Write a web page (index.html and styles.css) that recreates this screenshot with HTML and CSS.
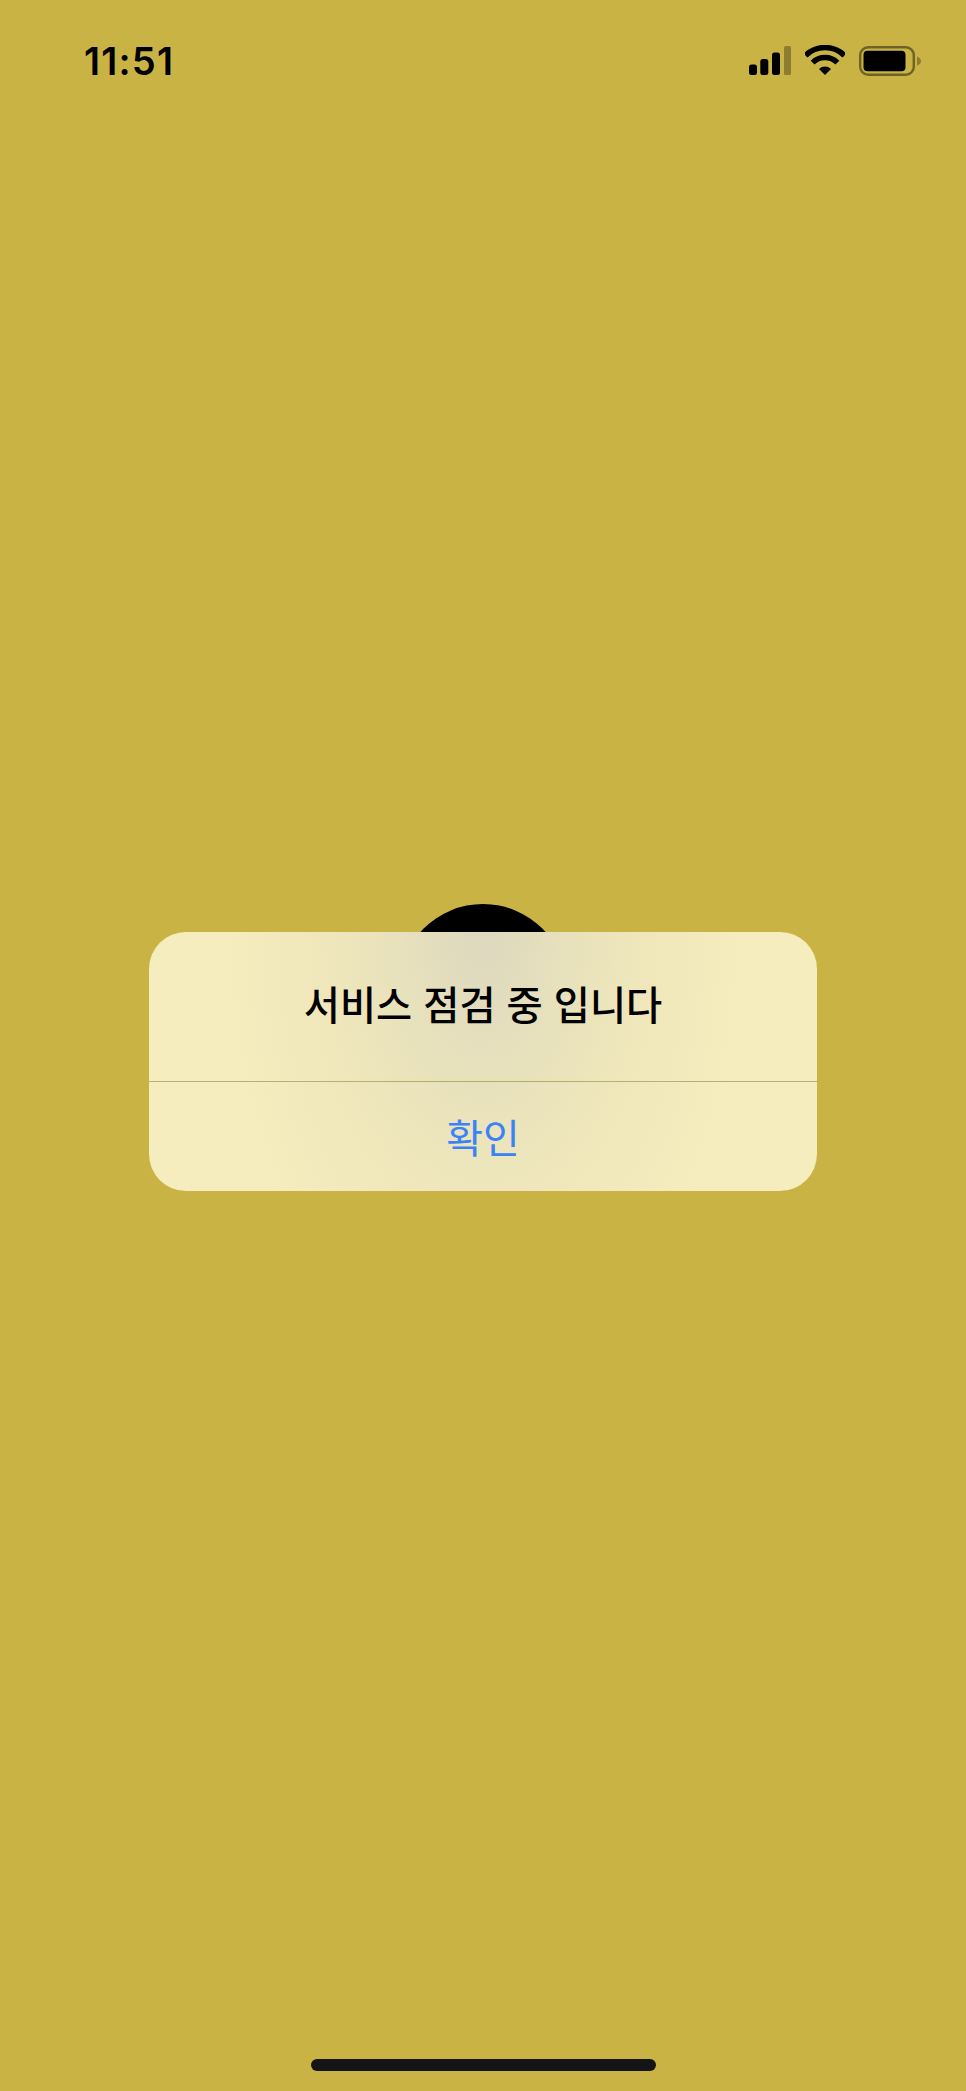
FILE: index.html
```html
<!DOCTYPE html>
<html lang="ko">
<head>
<meta charset="utf-8">
<title>서비스 점검</title>
<link rel="stylesheet" href="styles.css">
</head>
<body>
<div class="screen">
  <header class="status">
    <span class="time">11:51</span>
    <div class="icons">
      <svg class="signal" viewBox="0 0 42 29" width="42" height="29">
        <rect x="0" y="18.5" width="8" height="10.5" rx="2.5"/>
        <rect x="11.3" y="13" width="8" height="16" rx="2.5"/>
        <rect x="23" y="6.5" width="8" height="22.5" rx="2.5"/>
        <rect class="dim" x="35" y="0" width="7" height="29" rx="1.5"/>
      </svg>
      <svg class="wifi" viewBox="0 0 40 30" width="40" height="30">
        <path class="arc" d="M.55 10.55A27.5 27.5 0 0 1 39.45 10.55"/>
        <path class="arc" d="M7.6 17.6A17.5 17.5 0 0 1 32.4 17.6"/>
        <path d="M20 30L14 24A8.5 8.5 0 0 1 26 24Z"/>
      </svg>
      <svg class="battery" viewBox="0 0 62 30" width="62" height="30">
        <rect class="shell" x="1.2" y="1.2" width="53.6" height="27.6" rx="8"/>
        <rect x="4.5" y="4.7" width="42" height="20.6" rx="4"/>
        <path class="dim" d="M58 10.5C60.5 11.5 62 13 62 15S60.5 18.5 58 19.5Z"/>
      </svg>
    </div>
  </header>
  <main class="content">
    <div class="logo"></div>
  </main>
  <div class="home-bar"></div>
  <div class="alert">
    <h1 class="alert-title">서비스 점검 중 입니다</h1>
    <button class="alert-btn" type="button">확인</button>
  </div>
</div>
</body>
</html>
```

FILE: styles.css
```css
* { box-sizing: border-box; }
html, body { margin: 0; padding: 0; }
body { background: #c9b345; font-family: "Noto Sans CJK KR", "Inter", sans-serif; }
.screen {
  position: relative;
  width: 966px;
  height: 2091px;
  background: #c9b345;
  display: flex;
  flex-direction: column;
  overflow: hidden;
}
.status {
  height: 100px;
  flex: none;
  display: flex;
  justify-content: space-between;
  padding: 41px 45px 0 84px;
  align-items: flex-start;
}
.time {
  font-family: "Inter", sans-serif;
  font-weight: 600;
  font-size: 38px;
  line-height: 40px;
  color: #000;
  letter-spacing: 1.2px;
}
.icons {
  display: flex;
  align-items: flex-start;
  padding-top: 4px;
}
.signal { margin-top: 1px; margin-right: 14px; fill: #000; }
.wifi { margin-top: 0; margin-right: 14px; fill: #000; }
.battery { margin-top: 1px; fill: #000; }
.signal .dim, .battery .dim { fill: rgba(0,0,0,.3); }
.wifi .arc { fill: none; stroke: #000; stroke-width: 5.5; }
.battery .shell { fill: none; stroke: rgba(0,0,0,.45); stroke-width: 2.4; }
.content {
  flex: 1;
  display: flex;
  justify-content: center;
  align-items: flex-start;
  padding-top: 804px;
}
.logo {
  width: 168px;
  height: 168px;
  border-radius: 50%;
  background: #000;
}
.home-bar {
  flex: none;
  align-self: center;
  width: 345px;
  height: 12.5px;
  margin-bottom: 20px;
  border-radius: 7px;
  background: #151515;
}
.alert {
  position: absolute;
  left: 149px;
  top: 932px;
  width: 668px;
  height: 259px;
  border-radius: 37px;
  overflow: hidden;
  background:
    radial-gradient(ellipse 260px 440px at 50% 0, #ddd8bf 0, #e7e1bc 32%, #efe7bb 60%, #f5edbd 100%);
  display: flex;
  flex-direction: column;
}
.alert-title {
  margin: 0;
  height: 150px;
  flex: none;
  padding-top: 42px;
  text-align: center;
  font-size: 39.3px;
  line-height: 58px;
  font-weight: 500;
  color: #000;
  border-bottom: 1px solid rgba(130, 115, 40, .5);
}
.alert-btn {
  flex: 1;
  border: 0;
  padding: 0 0 2px;
  background: none;
  font-family: inherit;
  font-size: 40px;
  line-height: 58px;
  font-weight: 400;
  color: #3a82f7;
}
```
